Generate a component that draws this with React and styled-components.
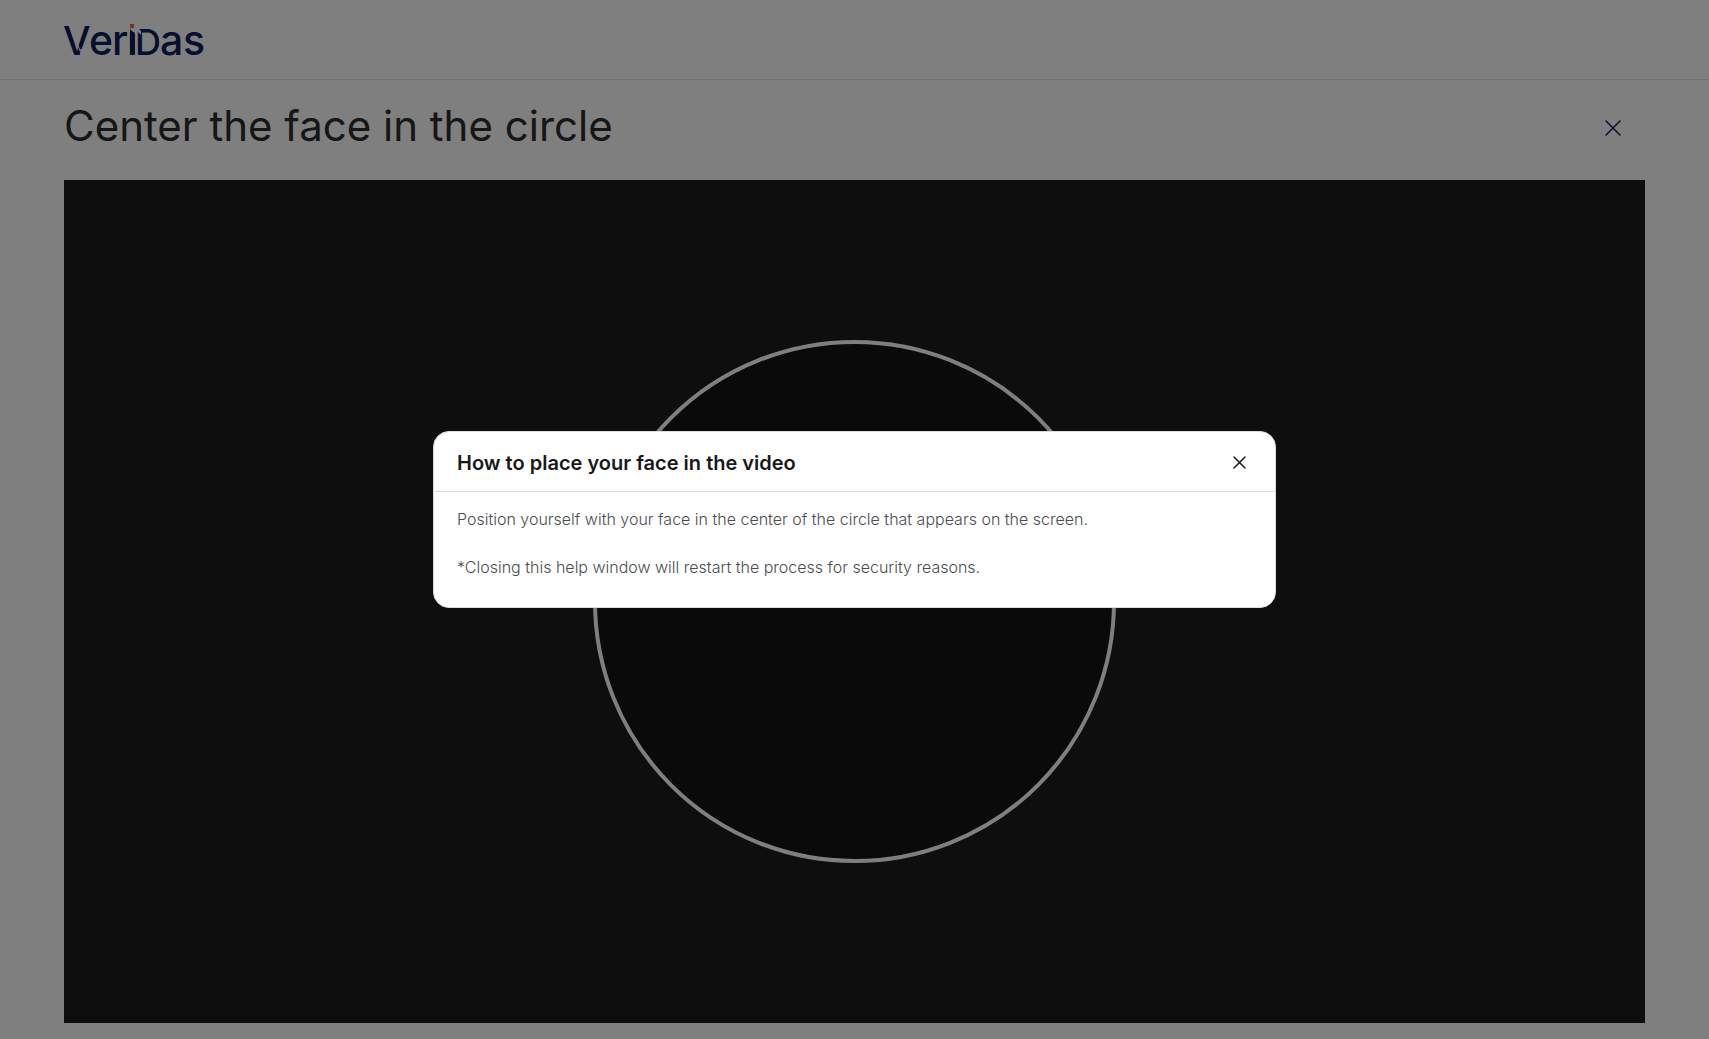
import React, { useState } from "react";
import styled, { createGlobalStyle } from "styled-components";

const GlobalStyle = createGlobalStyle`
  * {
    box-sizing: border-box;
  }
  body {
    margin: 0;
    background: #ffffff;
    font-family: Inter, "Liberation Sans", sans-serif;
  }
`;

const Page = styled.div`
  display: flex;
  flex-direction: column;
  min-height: 100vh;
`;

const Header = styled.header`
  display: flex;
  align-items: center;
  height: 80px;
  padding: 0 64px;
  border-bottom: 1px solid #dcdcdc;
`;

const HomeLink = styled.a`
  display: flex;
`;

const LogoSvg = styled.svg`
  overflow: visible;
`;

const Main = styled.main`
  flex: 1;
  display: flex;
  flex-direction: column;
  padding: 0 64px 16px;
`;

const TitleBar = styled.div`
  display: flex;
  align-items: center;
  justify-content: space-between;
  height: 100px;
  padding: 0 16px 4px 0;
`;

const Title = styled.h1`
  margin: 0;
  padding-bottom: 4px;
  color: #2c2c2e;
  font-size: 42px;
  font-weight: 400;
  line-height: 48px;
`;

const IconButton = styled.button`
  display: flex;
  align-items: center;
  justify-content: center;
  width: 32px;
  height: 32px;
  padding: 0;
  border: 0;
  background: none;
  color: ${({ $color }) => $color};
  cursor: pointer;
`;

const Video = styled.section`
  flex: 1;
  display: grid;
  place-items: center;
  background: #1c1c1c;
`;

const FaceCircle = styled.div`
  height: 62%;
  aspect-ratio: 1;
  border: 4px solid #ffffff;
  border-radius: 50%;
  background: #141414;
`;

const Overlay = styled.div`
  position: fixed;
  inset: 0;
  display: flex;
  align-items: center;
  justify-content: center;
  padding: 24px;
  background: rgba(0, 0, 0, 0.5);
`;

const Dialog = styled.div`
  width: 100%;
  max-width: 843px;
  border: 1px solid #dcdedd;
  border-radius: 16px;
  background: #ffffff;
`;

const DialogHeader = styled.div`
  display: flex;
  align-items: center;
  justify-content: space-between;
  height: 60px;
  padding: 2px 20px 0 23px;
  border-bottom: 1px solid #dcdedd;
`;

const DialogTitle = styled.h2`
  margin: 0;
  color: #18191b;
  font-size: 20px;
  font-weight: 600;
  line-height: 28px;
`;

const DialogBody = styled.div`
  display: flex;
  flex-direction: column;
  gap: 24px;
  padding: 15px 23px 28px;
`;

const Text = styled.p`
  margin: 0;
  color: #4c4d4f;
  font-size: 16px;
  font-weight: 300;
  line-height: 24px;
`;

function Logo() {
  return (
    <LogoSvg width="142" height="56" viewBox="0 0 142 56" role="img" aria-label="VeriDas">
      <g fill="#101f5c" fontFamily="Inter, sans-serif" fontSize="41" fontWeight="500">
        <text y="43">
          <tspan x="-1" fontSize="39">
            V
          </tspan>
          <tspan x="25">e</tspan>
          <tspan x="48">r</tspan>
          <tspan x="63">i</tspan>
          <tspan x="71" fontSize="36">
            D
          </tspan>
          <tspan x="96">a</tspan>
          <tspan x="119">s</tspan>
        </text>
      </g>
      {/* gap between the two strokes of the V */}
      <path d="M12 28L18 44" stroke="#ffffff" strokeWidth="1" />
      <path d="M16 37h8v7h-5z" fill="#ffffff" />
      {/* square dot and slanted stem of the i */}
      <rect x="63" y="10" width="9" height="10" fill="#ffffff" />
      <path d="M66 17L71 22V43H66z" fill="#101f5c" />
      <rect x="66" y="12" width="4" height="4" fill="#f25a5a" />
      <path d="M73 15L77 19V23L73 19z" fill="#ffffff" />
    </LogoSvg>
  );
}

function Cross({ size, strokeWidth }) {
  return (
    <svg width={size} height={size} viewBox={`0 0 ${size} ${size}`} aria-hidden="true">
      <path
        d={`M1 1L${size - 1} ${size - 1}M${size - 1} 1L1 ${size - 1}`}
        fill="none"
        stroke="currentColor"
        strokeWidth={strokeWidth}
        strokeLinecap="round"
      />
    </svg>
  );
}

function HelpDialog({ onClose }) {
  return (
    <Overlay>
      <Dialog role="dialog" aria-modal="true" aria-labelledby="help-title">
        <DialogHeader>
          <DialogTitle id="help-title">How to place your face in the video</DialogTitle>
          <IconButton type="button" $color="#18191b" aria-label="Close help" onClick={onClose}>
            <Cross size={13} strokeWidth={1.5} />
          </IconButton>
        </DialogHeader>
        <DialogBody>
          <Text>Position yourself with your face in the center of the circle that appears on the screen.</Text>
          <Text>*Closing this help window will restart the process for security reasons.</Text>
        </DialogBody>
      </Dialog>
    </Overlay>
  );
}

export default function App() {
  let [helpOpen, setHelpOpen] = useState(true);

  return (
    <>
      <GlobalStyle />
      <Page>
        <Header>
          <HomeLink href="#" aria-label="VeriDas">
            <Logo />
          </HomeLink>
        </Header>
        <Main>
          <TitleBar>
            <Title>Center the face in the circle</Title>
            <IconButton type="button" $color="#101f5c" aria-label="Close">
              <Cross size={16} strokeWidth={1.5} />
            </IconButton>
          </TitleBar>
          <Video>
            <FaceCircle />
          </Video>
        </Main>
      </Page>
      {helpOpen && <HelpDialog onClose={() => setHelpOpen(false)} />}
    </>
  );
}
